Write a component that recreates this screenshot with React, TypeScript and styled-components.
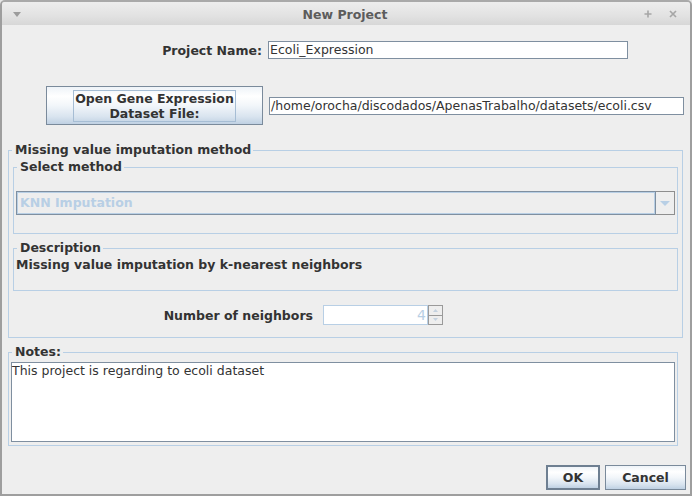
import React from "react";
import styled, { createGlobalStyle } from "styled-components";

const GlobalStyle = createGlobalStyle`
  html, body { margin: 0; padding: 0; background: #e6e6e6; }
  body { font-family: "DejaVu Sans", sans-serif; }
  * { box-sizing: border-box; }
`;

const FONT = `"DejaVu Sans", "Liberation Sans", sans-serif`;
const TITLE_BLUE = "#b8cfe5";
const FIELD_BORDER = "#7f8fa0";

const Window = styled.div`
  width: 692px;
  height: 496px;
  border: 2px solid #9e9e9e;
  border-top-color: #a9a9a9;
  border-radius: 5px 5px 0 0;
  background: #eeeeee;
  display: flex;
  flex-direction: column;
  font-family: ${FONT};
  font-size: 12.5px;
  color: #333333;
  overflow: hidden;
`;

const TitleBar = styled.div`
  height: 23px;
  flex: none;
  display: grid;
  grid-template-columns: 1fr auto 1fr;
  align-items: center;
  padding: 0 13px 0 11px;
  background: linear-gradient(to bottom, #ededed 0%, #e2e2e2 60%, #d7d7d7 100%);
`;

const TitleText = styled.div`
  font-weight: bold;
  color: #5c5c5c;
  padding-top: 1px;
`;

const TitleLeft = styled.div`
  display: flex;
  align-items: center;
  padding-top: 1px;
`;

const TitleRight = styled.div`
  display: flex;
  justify-content: flex-end;
  align-items: center;
  gap: 17px;
  padding-top: 1px;
`;

const Content = styled.div`
  flex: 1;
  display: flex;
  flex-direction: column;
`;

const NameRow = styled.div`
  display: flex;
  align-items: center;
  margin-top: 16px;
  height: 18px;
`;

const RowLabel = styled.label<{ $width: number }>`
  width: ${(p) => p.$width}px;
  text-align: right;
  font-weight: bold;
  white-space: nowrap;
  flex: none;
`;

const TextField = styled.div<{ $width: number; $gap: number }>`
  width: ${(p) => p.$width}px;
  height: 18px;
  margin-left: ${(p) => p.$gap}px;
  border: 1px solid ${FIELD_BORDER};
  background: #ffffff;
  padding: 0 1px;
  line-height: 16px;
  white-space: nowrap;
  overflow: hidden;
  flex: none;
`;

const FileRow = styled.div`
  display: flex;
  align-items: center;
  margin-top: 27px;
  padding-left: 44px;
`;

const BigButton = styled.button`
  width: 217px;
  height: 39px;
  flex: none;
  border: 1px solid #7a8a9b;
  background: linear-gradient(to bottom, #eef3f8 0%, #ffffff 25%, #f2f6fa 50%, #d9e4ef 80%, #bfd1e3 100%);
  font-family: ${FONT};
  font-size: 12.5px;
  font-weight: bold;
  color: #333333;
  padding: 0;
  display: flex;
  align-items: center;
  justify-content: center;
`;

const FocusRect = styled.span`
  display: inline-block;
  border: 1px solid #a6bdd4;
  line-height: 15px;
  padding: 0 1px;
  text-align: center;
`;

const Group = styled.fieldset<{ $width: number; $top: number }>`
  width: ${(p) => p.$width}px;
  margin: ${(p) => p.$top}px 0 0 6px;
  padding: 0;
  border: 1px solid ${TITLE_BLUE};
  min-width: 0;
`;

const SubGroup = styled.fieldset<{ $top: number }>`
  margin: ${(p) => p.$top}px 0 0 0;
  padding: 0;
  border: 1px solid ${TITLE_BLUE};
  min-width: 0;
`;

const Legend = styled.legend`
  margin-left: 3px;
  padding: 0 2px 0 3px;
  font-weight: bold;
  line-height: 16px;
  color: #333333;
`;

const Body = styled.div<{ $pad: string }>`
  padding: ${(p) => p.$pad};
`;

const Combo = styled.div`
  display: flex;
  height: 24px;
`;

const ComboField = styled.div`
  flex: 1;
  border: 1px solid ${FIELD_BORDER};
  box-shadow: inset 0 0 0 1px ${TITLE_BLUE};
  background: #eeeeee;
  font-weight: bold;
  color: ${TITLE_BLUE};
  line-height: 22px;
  padding-left: 3px;
`;

const ComboArrow = styled.div`
  width: 19px;
  flex: none;
  border: 1px solid #8e8e8e;
  border-left: none;
  background: #eeeeee;
  display: flex;
  align-items: center;
  justify-content: center;
`;

const DescText = styled.div`
  font-weight: bold;
  line-height: 16px;
`;

const NeighborRow = styled.div`
  display: flex;
  align-items: center;
  margin-top: 14px;
  padding-left: 150px;
  height: 20px;
`;

const Spinner = styled.div`
  display: flex;
  margin-left: 10px;
  height: 20px;
`;

const SpinField = styled.div`
  width: 105px;
  border: 1px solid ${TITLE_BLUE};
  background: #ffffff;
  color: ${TITLE_BLUE};
  font-size: 14px;
  text-align: right;
  padding-right: 1px;
  line-height: 18px;
`;

const SpinButtons = styled.div`
  width: 15px;
  display: flex;
  flex-direction: column;
`;

const SpinButton = styled.div`
  flex: 1;
  border: 1px solid #9a9a9a;
  background: #eeeeee;
  display: flex;
  align-items: center;
  justify-content: center;
  & + & { border-top: none; }
`;

const NotesArea = styled.div`
  height: 80px;
  border: 1px solid ${FIELD_BORDER};
  background: #ffffff;
  line-height: 15px;
  padding: 0;
`;

const ButtonRow = styled.div`
  display: flex;
  justify-content: flex-end;
  gap: 5px;
  margin-top: 19px;
  padding-right: 4px;
`;

const DialogButton = styled.button<{ $width: number; $default?: boolean }>`
  width: ${(p) => p.$width}px;
  height: 25px;
  border: ${(p) => (p.$default ? "2px solid #6e7f91" : "1px solid #7a8a9b")};
  background: linear-gradient(to bottom, #eef3f8 0%, #ffffff 25%, #f2f6fa 50%, #d9e4ef 80%, #bfd1e3 100%);
  font-family: ${FONT};
  font-size: 12.5px;
  font-weight: bold;
  color: #333333;
  padding: 0;
`;

export default function App() {
  return (
    <>
      <GlobalStyle />
      <Window>
        <TitleBar>
          <TitleLeft>
            <svg width="8" height="5" viewBox="0 0 8 5">
              <polygon points="0,0 8,0 4,5" fill="#9c9c9c" />
            </svg>
          </TitleLeft>
          <TitleText>New Project</TitleText>
          <TitleRight>
            <svg width="8" height="8" viewBox="0 0 8 8">
              <path d="M4 0.5V7.5M0.5 4H7.5" stroke="#a6a6a6" strokeWidth="1.6" />
            </svg>
            <svg width="8" height="8" viewBox="0 0 8 8">
              <path d="M1 1L7 7M7 1L1 7" stroke="#a6a6a6" strokeWidth="1.7" />
            </svg>
          </TitleRight>
        </TitleBar>
        <Content>
          <NameRow>
            <RowLabel $width={260}>Project Name:</RowLabel>
            <TextField $width={360} $gap={6}>Ecoli_Expression</TextField>
          </NameRow>
          <FileRow>
            <BigButton>
              <FocusRect>
                Open Gene Expression
                <br />
                Dataset File:
              </FocusRect>
            </BigButton>
            <TextField $width={415} $gap={6}>
              /home/orocha/discodados/ApenasTrabalho/datasets/ecoli.csv
            </TextField>
          </FileRow>

          <Group $width={675} $top={17}>
            <Legend>Missing value imputation method</Legend>
            <Body $pad="1px 4px 12px 4px">
              <SubGroup $top={0}>
                <Legend>Select method</Legend>
                <Body $pad="16px 2px 18px 2px">
                  <Combo>
                    <ComboField>KNN Imputation</ComboField>
                    <ComboArrow>
                      <svg width="10" height="5" viewBox="0 0 10 5">
                        <polygon points="0,0 10,0 5,5" fill={TITLE_BLUE} />
                      </svg>
                    </ComboArrow>
                  </Combo>
                </Body>
              </SubGroup>
              <SubGroup $top={6}>
                <Legend>Description</Legend>
                <Body $pad="1px 2px 17px 2px">
                  <DescText>Missing value imputation by k-nearest neighbors</DescText>
                </Body>
              </SubGroup>
              <NeighborRow>
                <RowLabel $width={150}>Number of neighbors</RowLabel>
                <Spinner>
                  <SpinField>4</SpinField>
                  <SpinButtons>
                    <SpinButton>
                      <svg width="5" height="3" viewBox="0 0 5 3">
                        <polygon points="0,3 5,3 2.5,0" fill="#c4d2e0" />
                      </svg>
                    </SpinButton>
                    <SpinButton>
                      <svg width="5" height="3" viewBox="0 0 5 3">
                        <polygon points="0,0 5,0 2.5,3" fill="#c4d2e0" />
                      </svg>
                    </SpinButton>
                  </SpinButtons>
                </Spinner>
              </NeighborRow>
            </Body>
          </Group>

          <Group $width={670} $top={6}>
            <Legend>Notes:</Legend>
            <Body $pad="2px 2px 3px 2px">
              <NotesArea>This project is regarding to ecoli dataset</NotesArea>
            </Body>
          </Group>

          <ButtonRow>
            <DialogButton $width={54} $default>OK</DialogButton>
            <DialogButton $width={81}>Cancel</DialogButton>
          </ButtonRow>
        </Content>
      </Window>
    </>
  );
}
